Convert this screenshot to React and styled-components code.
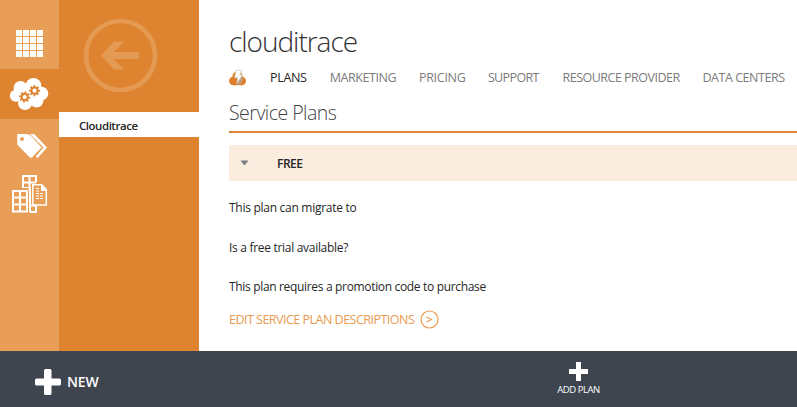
import React from 'react';
import styled, { createGlobalStyle } from 'styled-components';

const GlobalStyle = createGlobalStyle`
  * { box-sizing: border-box; }
  body { margin: 0; background: #fff; overflow: hidden; }
`;

const Page = styled.div`
  width: 797px;
  height: 407px;
  display: flex;
  flex-direction: column;
  font-family: 'Open Sans', 'Noto Sans', sans-serif;
  font-size: 12px;
  color: #262626;
  white-space: nowrap;
`;

const Body = styled.div`
  display: flex;
  height: 351px;
`;

const Rail = styled.nav`
  width: 59px;
  height: 100%;
  background: #e89e56;
  padding-top: 19px;
`;

const RailItem = styled.div`
  height: ${(p) => p.$height}px;
  background: ${(p) => (p.$active ? '#de8430' : 'transparent')};
  svg { display: block; }
`;

const SidePanel = styled.aside`
  width: 140px;
  height: 100%;
  background: #de8430;
  svg { display: block; }
`;

const SideItem = styled.div`
  height: 25px;
  padding-left: 20px;
  background: #fff;
  color: #262626;
  font-size: 11.5px;
  font-weight: 600;
  line-height: 27px;
  letter-spacing: -0.47px;
`;

const Main = styled.main`
  flex: 1;
  min-width: 0;
  padding-left: 30px;
`;

const Title = styled.h1`
  margin: 0;
  padding-top: 22px;
  height: 67px;
  color: #333;
  font-size: 28px;
  font-weight: 300;
  line-height: 38px;
  letter-spacing: -1.03px;
`;

const Tabs = styled.div`
  display: flex;
  height: 21px;
  svg { display: block; flex: none; }
`;

const Tab = styled.span`
  flex: none;
  width: ${(p) => p.$width}px;
  color: ${(p) => (p.$active ? '#262626' : '#7b7b7b')};
  font-size: 12.5px;
  line-height: 21px;
  letter-spacing: ${(p) => p.$tracking}px;
`;

const SectionTitle = styled.h2`
  margin: 0;
  height: 45px;
  padding-top: 11px;
  border-bottom: 2px solid #de8430;
  color: #444;
  font-size: 19.5px;
  font-weight: 300;
  line-height: 28px;
  letter-spacing: -0.52px;
`;

const PlanHeader = styled.div`
  display: flex;
  align-items: center;
  gap: 28px;
  height: 36px;
  margin-top: 12px;
  padding-left: 11px;
  background: #fbece0;
`;

const PlanName = styled.span`
  font-weight: 600;
  letter-spacing: -0.5px;
`;

const Questions = styled.div`
  display: flex;
  flex-direction: column;
  padding-top: 17px;
`;

const Question = styled.div`
  height: ${(p) => p.$height}px;
  line-height: 20px;
  letter-spacing: ${(p) => p.$tracking}px;
`;

const EditLink = styled.a`
  display: flex;
  align-items: center;
  gap: 6px;
  height: 20px;
  color: #e89b50;
  font-size: 12.5px;
  letter-spacing: -0.51px;
`;

const Footer = styled.footer`
  display: flex;
  height: 56px;
  background: #3e454f;
  color: #fff;
`;

const NewButton = styled.div`
  display: flex;
  align-items: center;
  gap: 6px;
  width: 521px;
  padding: 5px 0 0 35px;
  font-size: 14px;
  font-weight: 600;
  letter-spacing: -0.2px;
`;

const AddButton = styled.div`
  display: flex;
  flex-direction: column;
  align-items: center;
  gap: 2px;
  width: 115px;
  padding: 11px 0 0;
  font-size: 9.5px;
  line-height: 13px;
  letter-spacing: -0.43px;
  svg { margin-right: 1px; }
`;

const GridIcon = () => (
  <svg width="59" height="50" fill="#fff">
    {[0, 1, 2, 3].flatMap((r) =>
      [0, 1, 2, 3].map((c) => (
        <rect key={`${r}${c}`} x={16 + c * 7} y={11 + r * 7} width="6" height="6" />
      ))
    )}
  </svg>
);

const teeth = [0, 45, 90, 135, 180, 225, 270, 315];

const Gear = ({ x, y, turn }) => (
  <g transform={`translate(${x} ${y}) rotate(${turn})`}>
    <circle r="3.1" fill="none" stroke="#de8430" strokeWidth="2" />
    {teeth.map((a) => (
      <rect key={a} x="-0.9" y="-5.6" width="1.8" height="2.2" fill="#de8430" transform={`rotate(${a})`} />
    ))}
  </g>
);

const CloudIcon = () => (
  <svg width="59" height="50">
    <g fill="#fff">
      <circle cx="20.5" cy="19" r="7" />
      <circle cx="33.5" cy="16.8" r="7.8" />
      <circle cx="41.5" cy="24.5" r="6.8" />
      <circle cx="15.8" cy="26.8" r="6" />
      <circle cx="25" cy="34" r="7" />
      <circle cx="36.5" cy="31.5" r="7" />
      <circle cx="28" cy="26" r="9" />
    </g>
    <Gear x={24.7} y={28} turn={10} />
    <Gear x={34.5} y={21.7} turn={0} />
  </svg>
);

const TagsIcon = () => (
  <svg width="59" height="54">
    <path fill="#fff" d="M30 15h4.2L47 28.6 37.7 39l-2-1.4 7.8-9z" />
    <path fill="#fff" fillRule="evenodd" d="M17.2 15h9.8l3.4 1.2 11.2 12.3-10 10.3-2-.6-12.4-12.6zM22 18a2 2 0 1 0 0 4 2 2 0 0 0 0-4z" />
  </svg>
);

const BuildingsIcon = () => (
  <svg width="59" height="45" fill="none" stroke="#fff">
    <path strokeWidth="2" d="M23 15V3h13v6M29.5 3v14M23 9.5h13M30 39h6V33M30 32.500h6" />
    <path strokeWidth="1" d="M22 14.5h9" />
    <path strokeWidth="2" d="M13 18h14v20.500H13zM20 18v21M13 24.500h14M13 31.500h14" />
    <path strokeWidth="2" d="M30 16v23" />
    <path fill="#e89e56" strokeWidth="1.5" d="M32.800 11.800h9l4.500 4.700v15.500h-13.500z" />
    <path fill="#fff" stroke="none" d="M41 12v6h6z" />
    <path strokeWidth="1.200" d="M36 15.500h3M36 18h3M36 20.500h3M36 23h3M36 25.500h3M40 20.500h3M40 23h3M40 25.500h3" />
  </svg>
);

const BackIcon = () => (
  <svg width="140" height="112">
    <circle cx="61.5" cy="55.5" r="34.500" fill="none" stroke="#e59a53" strokeWidth="4.600" />
    <path fill="#e59a53" d="M42 55.500 55 41.500h10.500L54.500 52H80v7H54.500L65.500 69.500H55z" />
  </svg>
);

const BrandIcon = () => (
  <svg width="41" height="21" viewBox="0 0 41 21">
    <g fill="#e07e27">
      <circle cx="8.500" cy="9.300" r="5" />
      <circle cx="4.300" cy="14" r="4.200" />
      <circle cx="12.800" cy="14" r="4.200" />
      <rect x="4" y="11" width="9" height="7.200" />
    </g>
    <path d="M8 17.500 11.500 9l3 2.500-3 6z" fill="#b9aa9c" opacity=".75" />
    <path d="M7 3.300h5.500L11 7.800h2.500L7.800 16.800l.8-6H5.500z" fill="#fff" stroke="#c9c5c1" strokeWidth=".7" />
  </svg>
);

const Triangle = () => (
  <svg width="9" height="6">
    <path d="M.5.500h8l-4 5z" fill="#7b7f84" />
  </svg>
);

const CircleArrow = () => (
  <svg width="19" height="19" fill="none" stroke="#e89b50">
    <circle cx="9.500" cy="9.500" r="8.500" strokeWidth="1.200" />
    <path d="m6.500 7 5 2.500-5 2.500" strokeWidth="1.100" />
  </svg>
);

const tabs = [
  ['PLANS', 59.7, -0.33],
  ['MARKETING', 89.3, -0.42],
  ['PRICING', 68.900, -0.3],
  ['SUPPORT', 74.600, -0.62],
  ['RESOURCE PROVIDER', 140, -0.5],
  ['DATA CENTERS', 95, -0.46],
];

export default function App() {
  return (
    <Page>
      <GlobalStyle />
      <Body>
        <Rail>
          <RailItem $height={50}><GridIcon /></RailItem>
          <RailItem $height={50} $active><CloudIcon /></RailItem>
          <RailItem $height={54}><TagsIcon /></RailItem>
          <RailItem $height={50}><BuildingsIcon /></RailItem>
        </Rail>
        <SidePanel>
          <BackIcon />
          <SideItem>Clouditrace</SideItem>
        </SidePanel>
        <Main>
          <Title>clouditrace</Title>
          <Tabs>
            <BrandIcon />
            {tabs.map(([label, width, tracking], i) => (
              <Tab key={label} $width={width} $tracking={tracking} $active={i === 0}>{label}</Tab>
            ))}
          </Tabs>
          <SectionTitle>Service Plans</SectionTitle>
          <PlanHeader>
            <Triangle />
            <PlanName>FREE</PlanName>
          </PlanHeader>
          <Questions>
            <Question $height={40} $tracking={-0.28}>This plan can migrate to</Question>
            <Question $height={39} $tracking={-0.3}>Is a free trial available?</Question>
            <Question $height={32} $tracking={-0.33}>This plan requires a promotion code to purchase</Question>
          </Questions>
          <EditLink>
            EDIT SERVICE PLAN DESCRIPTIONS
            <CircleArrow />
          </EditLink>
        </Main>
      </Body>
      <Footer>
        <NewButton>
          <svg width="26" height="26" fill="#fff">
            <rect x="9" y="0" width="7.500" height="26" rx="1.500" />
            <rect x="0" y="9.500" width="26" height="7" rx="1.500" />
          </svg>
          NEW
        </NewButton>
        <AddButton>
          <svg width="19" height="19" fill="#fff">
            <path d="M7 0h5v7h7v5h-7v7H7v-7H0V7h7z" />
          </svg>
          ADD PLAN
        </AddButton>
      </Footer>
    </Page>
  );
}
